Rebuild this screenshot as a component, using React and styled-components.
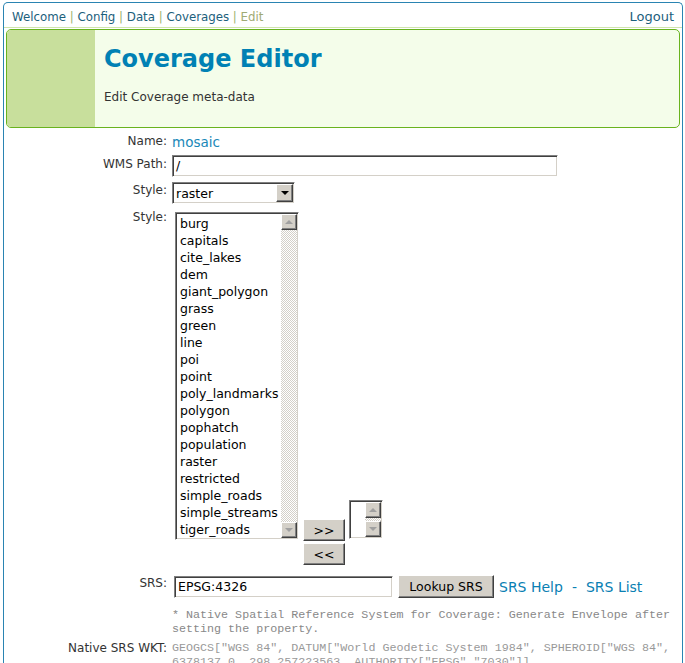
import React from "react";
import styled, { createGlobalStyle, css } from "styled-components";

const GlobalStyle = createGlobalStyle`
  html, body {
    margin: 0;
    padding: 0;
    background: #fff;
  }
  body {
    font-family: "DejaVu Sans", Verdana, sans-serif;
    color: #333;
    overflow: hidden;
  }
`;

// windows classic widget edges
const sunken = css`
  box-sizing: border-box;
  border: 1px solid;
  border-color: #808080 #fff #fff #808080;
  box-shadow: inset 1px 1px #404040, inset -1px -1px #d4d0c8;
  padding: 1px;
  background: #fff;
`;

const raised = css`
  box-sizing: border-box;
  border: 1px solid;
  border-color: #fff #404040 #404040 #fff;
  box-shadow: inset -1px -1px #808080;
  background: #d4d0c8;
`;

const Frame = styled.div`
  margin: 2px 2px 0 3px;
  height: 700px;
  border: 1px solid #2a84b2;
  border-bottom: 0;
  border-radius: 5px 5px 0 0;
`;

const Nav = styled.div`
  display: flex;
  justify-content: space-between;
  align-items: baseline;
  box-sizing: border-box;
  height: 25px;
  padding: 6px 8px 0;
  border-bottom: 1px solid #cfe4ad;
  font-size: 11.8px;
`;

const Crumbs = styled.div`
  color: #9cb36d;
`;

const Crumb = styled.a`
  color: ${(p) => (p.$current ? "#9faa74" : "#1c607c")};
  text-decoration: none;
`;

const Logout = styled.a`
  font-size: 13px;
  color: #1c607c;
  text-decoration: none;
`;

const Header = styled.div`
  display: flex;
  height: 97px;
  margin: 1px 2px 0;
  border: 1px solid #69b31e;
  border-radius: 5px;
  background: #f4fdea;
  overflow: hidden;
`;

const HeaderSide = styled.div`
  width: 88px;
  background: #c8df9c;
`;

const HeaderBody = styled.div`
  padding: 15px 0 0 9px;
`;

const Title = styled.h1`
  margin: 0;
  font: bold 24px/28px "DejaVu Sans", sans-serif;
  color: #0081b4;
`;

const Subtitle = styled.p`
  margin: 17px 0 0;
  font-size: 12px;
  line-height: 14px;
  color: #333;
`;

const Row = styled.div`
  display: grid;
  grid-template-columns: 163px 1fr;
  column-gap: 5px;
  align-items: start;
  margin-top: ${(p) => p.$gap}px;
`;

const Label = styled.div`
  text-align: right;
  font-size: 12px;
  line-height: 14px;
  color: #333;
  white-space: nowrap;
  padding-top: ${(p) => p.$pad || 0}px;
`;

const NameValue = styled.div`
  font-size: 13.5px;
  line-height: 16px;
  color: #1a88b8;
`;

const TextField = styled.div`
  ${sunken}
  width: ${(p) => p.$w}px;
  height: 22px;
  margin-left: ${(p) => p.$left || 0}px;
  padding: 1px 3px;
  font-size: 12.5px;
  line-height: 18px;
  color: #000;
`;

const Select = styled.div`
  ${sunken}
  display: flex;
  align-items: center;
  width: 123px;
  height: 22px;
`;

const SelectText = styled.span`
  flex: 1;
  padding-left: 2px;
  font-size: 12.5px;
  color: #000;
`;

const ArrowBox = styled.div`
  ${raised}
  display: flex;
  align-items: center;
  justify-content: center;
  width: ${(p) => p.$w || 16}px;
  height: ${(p) => p.$h || 16}px;

  &::after {
    content: "";
    border-left: 4px solid transparent;
    border-right: 4px solid transparent;
    ${(p) =>
      p.$dir === "up"
        ? css`border-bottom: 4px solid ${p.$color || "#a0a0a0"};`
        : css`border-top: 4px solid ${p.$color || "#a0a0a0"};`}
  }
`;

const Picker = styled.div`
  display: flex;
  align-items: flex-start;
  padding-left: 3px;
`;

const ListBox = styled.div`
  ${sunken}
  display: flex;
  width: ${(p) => p.$w}px;
  height: ${(p) => p.$h}px;
  margin-top: ${(p) => p.$top || 0}px;
  margin-left: ${(p) => p.$left || 0}px;
`;

const Options = styled.div`
  flex: 1;
  overflow: hidden;
  padding: 1px 0 0 3px;
  font-size: 12.5px;
  line-height: 17px;
  color: #000;
`;

const Track = styled.div`
  display: flex;
  flex-direction: column;
  justify-content: space-between;
  width: 16px;
  background: repeating-conic-gradient(#d4d0c8 0 25%, #fff 0 50%) 0 0 / 2px 2px;
`;

const MoveButtons = styled.div`
  display: flex;
  flex-direction: column;
  gap: 2px;
  margin: 309px 0 0 4px;
`;

const WinButton = styled.button`
  ${raised}
  width: ${(p) => p.$w}px;
  height: ${(p) => p.$h || 22}px;
  margin-left: ${(p) => p.$left || 0}px;
  padding: 0;
  font: 12.5px "DejaVu Sans", sans-serif;
  color: #000;
`;

const SrsLine = styled.div`
  display: flex;
  align-items: center;
`;

const Links = styled.div`
  margin-left: 5px;
  font-size: 14px;
  color: #0a80b3;
  white-space: nowrap;
`;

const Dash = styled.span`
  margin: 0 9px;
`;

const Mono = styled.div`
  font-family: "Liberation Mono", "Courier New", monospace;
  font-size: 11.7px;
  line-height: 14px;
  color: ${(p) => p.$color || "#888"};
`;

const styles = [
  "burg",
  "capitals",
  "cite_lakes",
  "dem",
  "giant_polygon",
  "grass",
  "green",
  "line",
  "poi",
  "point",
  "poly_landmarks",
  "polygon",
  "pophatch",
  "population",
  "raster",
  "restricted",
  "simple_roads",
  "simple_streams",
  "tiger_roads",
];

const wkt =
  'GEOGCS["WGS 84", DATUM["World Geodetic System 1984", SPHEROID["WGS 84", 6378137.0, 298.257223563, AUTHORITY["EPSG","7030"]], AUTHORITY["EPSG","6326"]], PRIMEM["Greenwich", 0.0, AUTHORITY["EPSG","8901"]], UNIT["degree", 0.017453292519943295], AXIS["Geodetic longitude", EAST], AXIS["Geodetic latitude", NORTH], AUTHORITY["EPSG","4326"]]';

export default function App() {
  return (
    <>
      <GlobalStyle />
      <Frame>
        <Nav>
          <Crumbs>
            <Crumb href="#">Welcome</Crumb> | <Crumb href="#">Config</Crumb> |{" "}
            <Crumb href="#">Data</Crumb> | <Crumb href="#">Coverages</Crumb> |{" "}
            <Crumb $current>Edit</Crumb>
          </Crumbs>
          <Logout href="#">Logout</Logout>
        </Nav>

        <Header>
          <HeaderSide />
          <HeaderBody>
            <Title>Coverage Editor</Title>
            <Subtitle>Edit Coverage meta-data</Subtitle>
          </HeaderBody>
        </Header>

        <Row $gap={6}>
          <Label>Name:</Label>
          <NameValue>mosaic</NameValue>
        </Row>

        <Row $gap={5}>
          <Label $pad={2}>WMS Path:</Label>
          <TextField $w={386}>/</TextField>
        </Row>

        <Row $gap={5}>
          <Label $pad={1}>Style:</Label>
          <Select>
            <SelectText>raster</SelectText>
            <ArrowBox $dir="down" $color="#000" $w={17} $h={18} />
          </Select>
        </Row>

        <Row $gap={6}>
          <Label>Style:</Label>
          <Picker>
            <ListBox $w={124} $h={328} $top={2}>
              <Options>
                {styles.map((s) => (
                  <div key={s}>{s}</div>
                ))}
              </Options>
              <Track>
                <ArrowBox $dir="up" />
                <ArrowBox $dir="down" />
              </Track>
            </ListBox>
            <MoveButtons>
              <WinButton $w={42}>&gt;&gt;</WinButton>
              <WinButton $w={42}>&lt;&lt;</WinButton>
            </MoveButtons>
            <ListBox $w={34} $h={39} $top={290} $left={4}>
              <Options />
              <Track>
                <ArrowBox $dir="up" />
                <ArrowBox $dir="down" />
              </Track>
            </ListBox>
          </Picker>
        </Row>

        <Row $gap={10}>
          <Label $pad={1}>SRS:</Label>
          <SrsLine>
            <TextField $w={219} $left={2}>EPSG:4326</TextField>
            <WinButton $w={96} $h={23} $left={5}>
              Lookup SRS
            </WinButton>
            <Links>
              SRS Help<Dash>-</Dash>SRS List
            </Links>
          </SrsLine>
        </Row>

        <Row $gap={10}>
          <div />
          <Mono>
            * Native Spatial Reference System for Coverage: Generate Envelope after setting the
            property.
          </Mono>
        </Row>

        <Row $gap={5}>
          <Label>Native SRS WKT:</Label>
          <Mono $color="#999">{wkt}</Mono>
        </Row>
      </Frame>
    </>
  );
}
